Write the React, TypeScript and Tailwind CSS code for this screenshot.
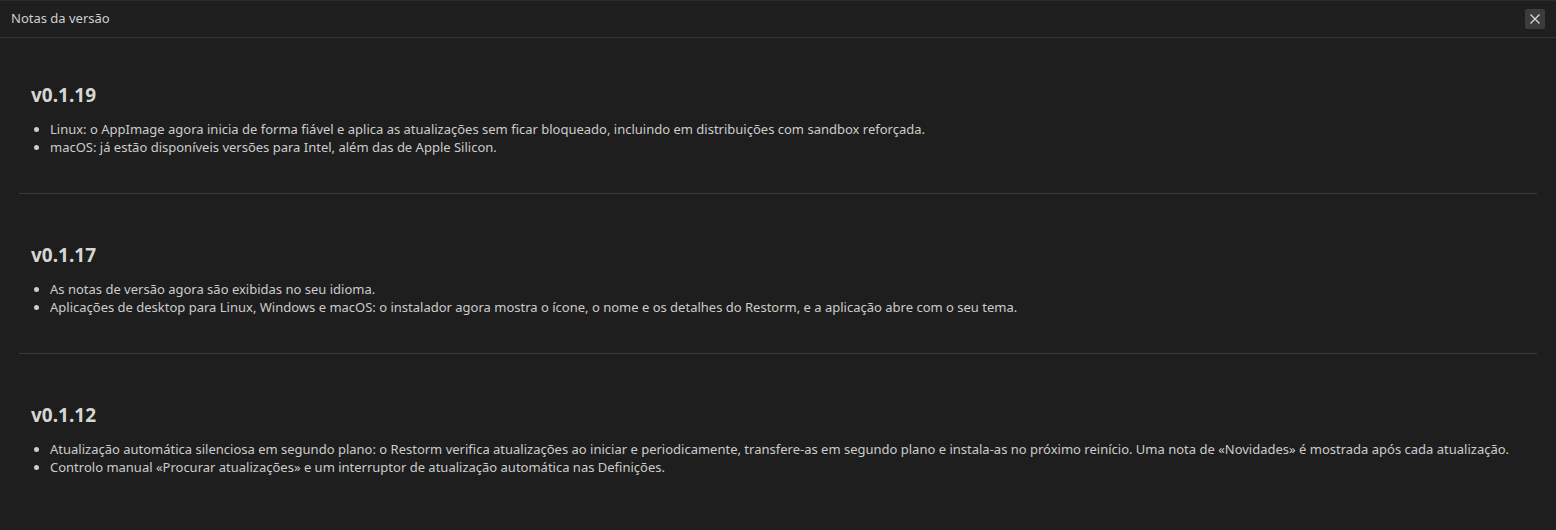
const releases = [
  {
    version: 'v0.1.19',
    notes: [
      'Linux: o AppImage agora inicia de forma fiável e aplica as atualizações sem ficar bloqueado, incluindo em distribuições com sandbox reforçada.',
      'macOS: já estão disponíveis versões para Intel, além das de Apple Silicon.',
    ],
  },
  {
    version: 'v0.1.17',
    notes: [
      'As notas de versão agora são exibidas no seu idioma.',
      'Aplicações de desktop para Linux, Windows e macOS: o instalador agora mostra o ícone, o nome e os detalhes do Restorm, e a aplicação abre com o seu tema.',
    ],
  },
  {
    version: 'v0.1.12',
    notes: [
      'Atualização automática silenciosa em segundo plano: o Restorm verifica atualizações ao iniciar e periodicamente, transfere-as em segundo plano e instala-as no próximo reinício. Uma nota de «Novidades» é mostrada após cada atualização.',
      'Controlo manual «Procurar atualizações» e um interruptor de atualização automática nas Definições.',
    ],
  },
];

function App() {
  return (
    <div className="w-[1556px] h-[530px] bg-[#1e1e1e] font-['Noto_Sans',sans-serif] overflow-hidden flex flex-col">
      <header className="h-[38px] shrink-0 flex items-center justify-between pl-[11px] pr-[11px] bg-[#1f1f1f] border-t border-t-[#2b2b2b] border-b border-b-[#343434]">
        <span className="text-[13px] text-[#cfcfcf]">Notas da versão</span>
        <button className="w-[20px] h-[20px] flex items-center justify-center rounded-[2px] bg-[#3c3c3c]">
          <svg width="12" height="12" viewBox="0 0 12 12" fill="none" stroke="#d8d8d8" strokeWidth="1.3">
            <path d="M1.5 1.5l9 9M10.5 1.5l-9 9" />
          </svg>
        </button>
      </header>
      <div className="px-[19px]">
        {releases.map((r, i) => (
          <section
            key={r.version}
            className={`px-[12px] pb-[37px] ${i === 0 ? 'pt-[45px]' : 'pt-[49px]'} ${
              i < releases.length - 1 ? 'border-b border-[#3a3a3a]' : ''
            }`}
          >
            <h2 className="text-[19px] leading-[24px] font-bold text-[#d6d6d6] mb-[13px]">{r.version}</h2>
            <ul className="list-disc pl-[19px] text-[13px] leading-[18px] text-[#cccccc] marker:text-[#cccccc]">
              {r.notes.map((n) => (
                <li key={n}>{n}</li>
              ))}
            </ul>
          </section>
        ))}
      </div>
    </div>
  );
}

export default App;
